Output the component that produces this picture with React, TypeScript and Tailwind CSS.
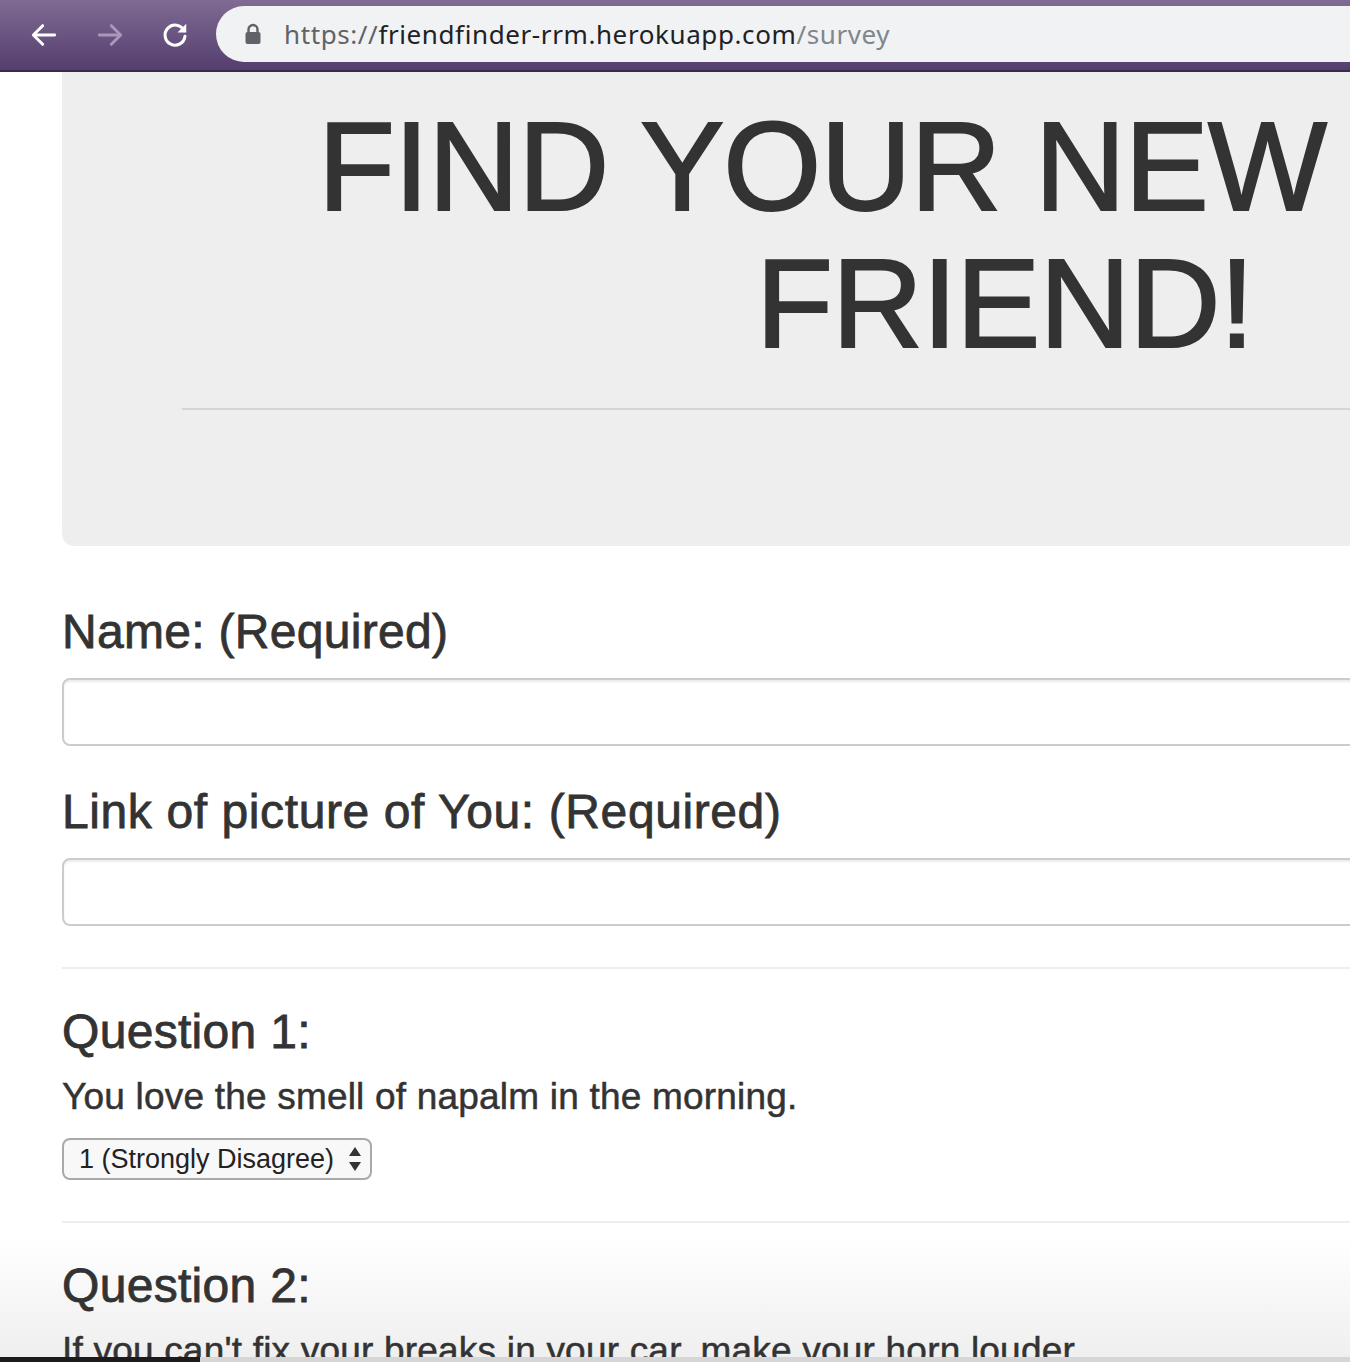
import React from "react";

const sans = "font-['Liberation_Sans',Arial,sans-serif]";

function BrowserBar() {
  return (
    <div className="relative h-[72px] w-full bg-gradient-to-b from-[#806b94] to-[#553e6e] border-b-2 border-[#3b2a4d]">
      <div className="flex h-full items-center">
        {/* nav buttons */}
        <div className="flex w-[216px] items-center pl-[28px] gap-[34px]">
          <svg width="32" height="32" viewBox="0 0 24 24" fill="none" stroke="#ffffff" strokeWidth="2.2" strokeLinecap="round" strokeLinejoin="round">
            <path d="M20 12H5" />
            <path d="M11 5l-7 7 7 7" />
          </svg>
          <svg width="32" height="32" viewBox="0 0 24 24" fill="none" stroke="#a998ba" strokeWidth="2.2" strokeLinecap="round" strokeLinejoin="round">
            <path d="M4 12h15" />
            <path d="M13 5l7 7-7 7" />
          </svg>
          <svg width="30" height="30" viewBox="0 0 24 24" fill="none">
            <path d="M19.2 8.5A8 8 0 1 0 20 13" stroke="#ffffff" strokeWidth="2.4" strokeLinecap="round" />
            <path d="M21 3v7h-7z" fill="#ffffff" />
          </svg>
        </div>
        {/* address pill */}
        <div className="-mt-[2px] flex h-[56px] flex-1 items-center rounded-l-[28px] bg-[#f1f2f4] pl-[28px]">
          <svg width="18" height="22" viewBox="0 0 18 22" className="mr-[22px]">
            <path d="M4.5 9V6.5a4.5 4.5 0 0 1 9 0V9" fill="none" stroke="#5f6368" strokeWidth="2.4" />
            <rect x="1.5" y="9" width="15" height="12" rx="2" fill="#5f6368" />
          </svg>
          <span className="font-['Noto_Sans',sans-serif] text-[26px] tracking-[0.6px] text-[#202124]">
            <span className="text-[#5f6368]">https://</span>
            friendfinder-rrm.herokuapp.com
            <span className="text-[#80868b]">/survey</span>
          </span>
        </div>
      </div>
    </div>
  );
}

function TextField() {
  return (
    <input
      type="text"
      className="block h-[68px] w-[1320px] rounded-[8px] border-2 border-[#cccccc] bg-white shadow-[inset_0_2px_2px_rgba(0,0,0,0.075)] outline-none"
    />
  );
}

function Question({ n, text }: { n: number; text: string }) {
  return (
    <div>
      <h3 className="text-[48px] leading-[53px] tracking-[0.3px] [-webkit-text-stroke:0.8px_#333]">Question {n}:</h3>
      <p className="mt-[12px] text-[37px] leading-[53px] tracking-[0.2px] [-webkit-text-stroke:0.5px_#333]">{text}</p>
      {n === 1 && (
        <div className="mt-[15px] flex h-[42px] w-[310px] items-center justify-between rounded-[8px] border-2 border-[#a9a9a9] bg-[#f8f8f8] pl-[15px] pr-[8px]">
          <span className="text-[27px] leading-none text-[#222]">1 (Strongly Disagree)</span>
          <svg width="14" height="26" viewBox="0 0 14 26">
            <path d="M7 1l6 9H1z" fill="#333" />
            <path d="M7 25l6-9H1z" fill="#333" />
          </svg>
        </div>
      )}
    </div>
  );
}

export default function App() {
  return (
    <div className={`${sans} relative h-[1362px] w-[1350px] overflow-hidden bg-white text-[#333333]`}>
      {/* window bottom shading, behind the page text */}
      <div className="pointer-events-none absolute bottom-[5px] left-0 right-0 h-[120px] bg-gradient-to-b from-transparent to-[#efefef]" />

      <div className="relative">
        <BrowserBar />

        <div className="pl-[62px]">
          {/* Jumbotron */}
          <div className="h-[474px] rounded-bl-[12px] bg-[#eeeeee] pt-[26px]">
            <h1 className="text-[126px] leading-[137px] tracking-[-0.9px] whitespace-nowrap [-webkit-text-stroke:2px_#333]">
              <span className="ml-[256px] block">FIND YOUR NEW</span>
              <span className="ml-[694px] block">FRIEND!</span>
            </h1>
            <div className="ml-[120px] mt-[36px] h-[2px] bg-[#d5d5d5]" />
          </div>

          {/* Form */}
          <div className="mt-[59px]">
            <label className="block text-[48px] leading-[53px] tracking-[0.3px] [-webkit-text-stroke:0.8px_#333]">Name: (Required)</label>
            <div className="mt-[20px]">
              <TextField />
            </div>
            <label className="mt-[39px] block text-[48px] leading-[53px] tracking-[0.6px] [-webkit-text-stroke:0.8px_#333]">
              Link of picture of You: (Required)
            </label>
            <div className="mt-[20px]">
              <TextField />
            </div>

            <div className="mt-[41px] h-[2px] bg-[#eeeeee]" />
            <div className="mt-[36px]">
              <Question n={1} text="You love the smell of napalm in the morning." />
            </div>

            <div className="mt-[41px] h-[2px] bg-[#eeeeee]" />
            <div className="mt-[36px]">
              <Question n={2} text="If you can't fix your breaks in your car, make your horn louder." />
            </div>
          </div>
        </div>
      </div>

      <div className="absolute bottom-0 left-0 right-0 flex h-[5px]">
        <div className="w-[200px] bg-[#1c1a1a]" />
        <div className="flex-1 bg-[#d6d6d6]" />
      </div>
    </div>
  );
}
